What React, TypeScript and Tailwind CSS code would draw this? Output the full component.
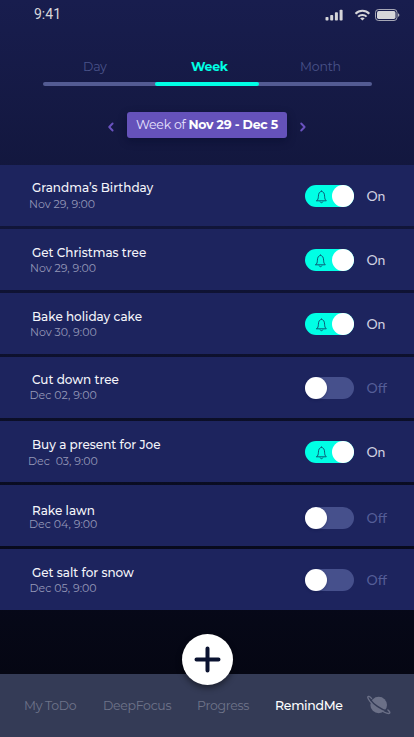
import React from 'react';

type Reminder = {
  title: string;
  date: string;
  on: boolean;
  pad: string;
  dateCls: string;
  togglePad: string;
  bell: string;
};

const reminders: Reminder[] = [
  { title: 'Grandma’s Birthday', date: 'Nov 29, 9:00', on: true, pad: 'pt-[14px]', dateCls: 'ml-[29px] mt-[2px]', togglePad: 'pt-5', bell: 'ml-[11px]' },
  { title: 'Get Christmas tree', date: 'Nov 29, 9:00', on: true, pad: 'pt-[15px]', dateCls: 'ml-[30px] mt-[1px]', togglePad: 'pt-5', bell: 'ml-[10px]' },
  { title: 'Bake holiday cake', date: 'Nov 30, 9:00', on: true, pad: 'pt-[15px]', dateCls: 'ml-[30px] mt-[1px]', togglePad: 'pt-5', bell: 'ml-[11px]' },
  { title: 'Cut down tree', date: 'Dec 02, 9:00', on: false, pad: 'pt-[14px]', dateCls: 'ml-[29.5px] mt-[1px]', togglePad: 'pt-5', bell: '' },
  { title: 'Buy a present for Joe', date: 'Dec  03, 9:00', on: true, pad: 'pt-[15px]', dateCls: 'ml-[28px] mt-[2px]', togglePad: 'pt-5', bell: 'ml-[11px]' },
  { title: 'Rake lawn', date: 'Dec 04, 9:00', on: false, pad: 'pt-[17px]', dateCls: 'ml-[29px] -mt-[1px]', togglePad: 'pt-[22px]', bell: '' },
  { title: 'Get salt for snow', date: 'Dec 05, 9:00', on: false, pad: 'pt-[15px]', dateCls: 'ml-[29.5px] mt-[1px]', togglePad: 'pt-5', bell: '' },
];

function Bell({ className }: { className: string }) {
  return (
    <svg className={className} width="11" height="14" viewBox="0 0 11 14" fill="none" stroke="#0b5c78" strokeWidth="1" strokeLinecap="round" strokeLinejoin="round">
      <path d="M5.500 1.200V.8M.7 10.800h9.600C9 9.600 8.700 8.700 8.600 6.200 8.500 3.200 7.400 1.500 5.500 1.500S2.500 3.200 2.400 6.200C2.300 8.700 2 9.600.7 10.800Z" />
      <path d="M4.200 11.900c.4 1.200 2.200 1.200 2.600 0" />
    </svg>
  );
}

function Toggle({ on, bell }: { on: boolean; bell: string }) {
  return on ? (
    <div className="flex h-[22px] w-[49px] items-center justify-between rounded-full bg-[#00ffe5]">
      <Bell className={`${bell} mt-px`} />
      <div className="size-[22px] rounded-full bg-white" />
    </div>
  ) : (
    <div className="h-[22px] w-[49px] rounded-full bg-[#46508c]">
      <div className="size-[22px] rounded-full bg-white shadow-[0_1px_3px_rgba(10,15,60,0.3)]" />
    </div>
  );
}

function StatusBar() {
  return (
    <div className="flex h-[30px] items-start text-[#d6d6da]">
      <span className="ml-[34px] mt-[6px] h-4 w-[80px] font-['Roboto',sans-serif] text-[14px] leading-4">9:41</span>
      <svg className="ml-[211px] mt-[9px]" width="75" height="12" viewBox="0 0 75 12" fill="currentColor">
        <rect x="0.500" y="8" width="3" height="3.500" rx="0.800" />
        <rect x="5.200" y="6" width="3" height="5.500" rx="0.800" />
        <rect x="9.900" y="3.200" width="3" height="8.300" rx="0.800" />
        <rect x="14.600" y="0.700" width="3" height="10.800" rx="0.800" />
        <g fill="none" stroke="currentColor" strokeWidth="2">
          <path d="M30.500 4.700c3.800-4 10-4 13.800 0" />
          <path d="M33.200 7.600c2.300-2.300 6.100-2.300 8.400 0" />
        </g>
        <path d="m37.400 11.500-2.300-2.200c1.300-1.200 3.300-1.200 4.600 0Z" />
        <rect x="50.500" y="0.500" width="21.500" height="11" rx="3" fill="none" stroke="currentColor" strokeOpacity=".75" />
        <rect x="52" y="2" width="18.500" height="8" rx="1.700" />
        <path d="M73.200 4.200c1.500.5 1.500 3.100 0 3.600Z" />
      </svg>
    </div>
  );
}

function Chevron({ flip, className }: { flip?: boolean; className: string }) {
  return (
    <svg className={className} width="8" height="10" viewBox="0 0 8 10" fill="none" stroke="#6a52c0" strokeWidth="1.900" strokeLinecap="round" strokeLinejoin="round">
      <path d={flip ? 'M2.200 1.500 5.600 5 2.200 8.500' : 'M5.600 1.500 2.200 5l3.400 3.500'} />
    </svg>
  );
}

function Planet() {
  return (
    <svg width="24" height="20" viewBox="0 0 24 20" fill="none">
      <circle cx="11.700" cy="10" r="8.300" fill="#6b7087" />
      <path d="M4.500 3.400C2.500 1.200.8.800.8 2.200.8 4.200 5 8.700 10.500 12.700 15.500 16.300 21 19.200 22.500 18.200c.7-.6 0-1.800-1.600-3.200" stroke="#6b7087" strokeWidth="1.400" strokeLinecap="round" />
      <path d="M3.500 4.800C6.500 9 13.500 14.400 20 16" stroke="#343b56" strokeWidth="1.400" />
    </svg>
  );
}

export default function App() {
  return (
    <div className="relative flex h-[737px] w-[414px] flex-col overflow-hidden bg-gradient-to-b from-[#181d4e] to-[#04050e] font-['Montserrat','Inter',sans-serif]">
      <StatusBar />

      <div className="mt-7 h-6 pl-[43px] pr-[42px] text-[12.500px] leading-[17px] tracking-[-0.2px]">
        <div className="flex h-6 text-[#4a538a]">
          <span className="ml-[40px] w-[108px]">Day</span>
          <span className="w-[109px] font-bold tracking-[-0.3px] text-[#00ffe5]">Week</span>
          <span>Month</span>
        </div>
      </div>
      <div className="ml-[43px] h-1 w-[329px] shrink-0 rounded-full bg-[#535b93]">
        <div className="ml-[112px] h-1 w-[104px] rounded-full bg-[#00ffe5]" />
      </div>

      <div className="mt-[26px] flex h-[26px] shrink-0 items-center">
        <Chevron className="ml-[107px] mr-3 mt-1" />
        <div className="flex h-[26px] w-[160px] items-center justify-center whitespace-nowrap rounded-[3px] bg-[#6552ba] text-[12.500px] leading-4 tracking-[-0.25px] text-[#e8e4ff] shadow-[0_3px_8px_rgba(5,8,40,0.45)]">
          <span>Week of <b className="font-bold text-white">Nov 29 - Dec 5</b></span>
        </div>
        <Chevron flip className="ml-3 mt-1" />
      </div>

      <div className="mt-[27px] flex shrink-0 flex-col gap-[3px]">
        {reminders.map((r) => (
          <div key={r.title} className="flex h-[61px] bg-[#1d245e]">
            <div className={`w-[305px] ${r.pad}`}>
              <div className="ml-[32px] whitespace-nowrap text-[12px] font-medium leading-[17px] text-[#f4f4fa]">{r.title}</div>
              <div className={`-translate-y-px whitespace-pre text-[11px] leading-[14px] text-[#9598b8] ${r.dateCls}`}>{r.date}</div>
            </div>
            <div className={`flex ${r.togglePad}`}>
              <Toggle on={r.on} bell={r.bell} />
              <span className={`ml-[12.500px] font-['Lato',sans-serif] text-[14px] leading-[21px] ${r.on ? 'text-[#cfd0e0]' : 'text-[#555e98]'}`}>{r.on ? 'On' : 'Off'}</span>
            </div>
          </div>
        ))}
      </div>

      <div className="mt-16 flex h-[63px] shrink-0 bg-[#343b56] pl-[24px] pt-[23px] text-[12.500px] leading-[17px] tracking-[-0.3px] text-[#6f748a]">
        <span className="w-[79px]">My ToDo</span>
        <span className="w-[94px]">DeepFocus</span>
        <span className="w-[78px]">Progress</span>
        <span className="w-[91.500px] font-medium text-white">RemindMe</span>
        <div className="-mt-[2px]"><Planet /></div>
      </div>

      <div className="absolute left-[182px] top-[634px] flex size-[51px] items-center justify-center rounded-full bg-white shadow-[0_3px_6px_rgba(0,0,0,0.45)]">
        <svg width="27" height="27" viewBox="0 0 27 27" stroke="#0a1230" strokeWidth="4" strokeLinecap="round">
          <path d="M13.500 2.500v22M2.500 13.500h22" />
        </svg>
      </div>
    </div>
  );
}
